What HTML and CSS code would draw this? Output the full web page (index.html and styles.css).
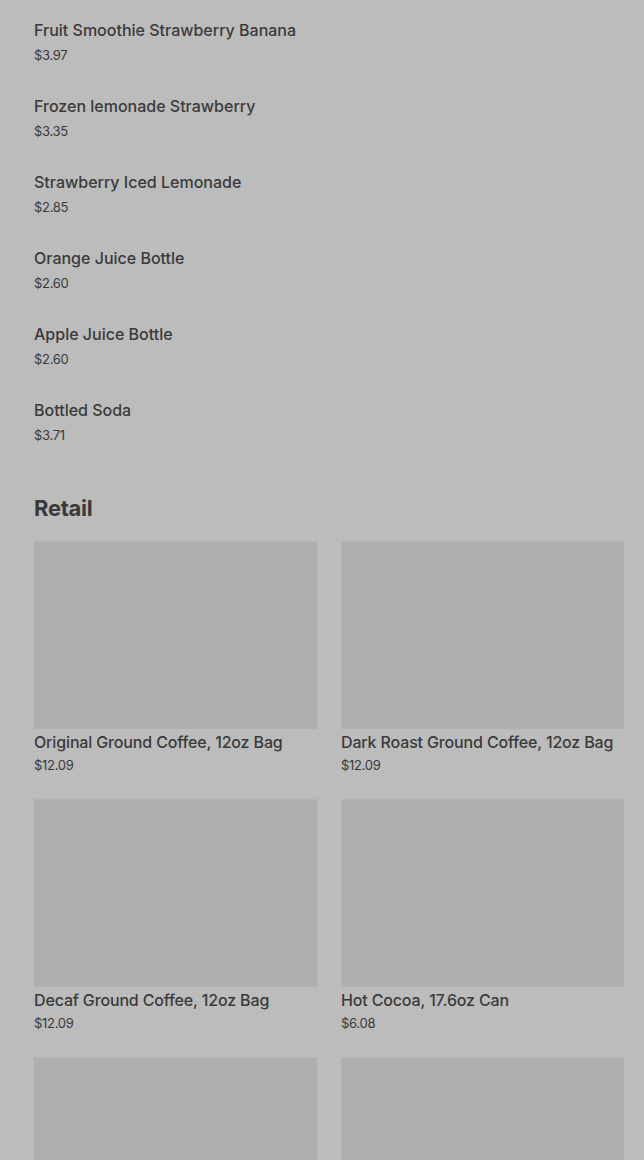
FILE: index.html
```html
<!DOCTYPE html>
<html lang="en">
<head>
    <meta charset="UTF-8">
    <meta name="viewport" content="width=device-width, initial-scale=1.0">
    <title>Menu</title>
    <link rel="stylesheet" href="styles.css">
</head>
<body>
    <div class="page">
        <ul class="menu-list">
            <li class="menu-item">
                <p class="item-name">Fruit Smoothie Strawberry Banana</p>
                <p class="item-price">$3.97</p>
            </li>
            <li class="menu-item">
                <p class="item-name">Frozen lemonade Strawberry</p>
                <p class="item-price">$3.35</p>
            </li>
            <li class="menu-item">
                <p class="item-name">Strawberry Iced Lemonade</p>
                <p class="item-price">$2.85</p>
            </li>
            <li class="menu-item">
                <p class="item-name">Orange Juice Bottle</p>
                <p class="item-price">$2.60</p>
            </li>
            <li class="menu-item">
                <p class="item-name">Apple Juice Bottle</p>
                <p class="item-price">$2.60</p>
            </li>
            <li class="menu-item">
                <p class="item-name">Bottled Soda</p>
                <p class="item-price">$3.71</p>
            </li>
        </ul>

        <h2 class="section-title">Retail</h2>
        <div class="card-grid">
            <div class="card">
                <div class="card-img"></div>
                <p class="item-name">Original Ground Coffee, 12oz Bag</p>
                <p class="item-price">$12.09</p>
            </div>
            <div class="card">
                <div class="card-img"></div>
                <p class="item-name">Dark Roast Ground Coffee, 12oz Bag</p>
                <p class="item-price">$12.09</p>
            </div>
            <div class="card">
                <div class="card-img"></div>
                <p class="item-name">Decaf Ground Coffee, 12oz Bag</p>
                <p class="item-price">$12.09</p>
            </div>
            <div class="card">
                <div class="card-img"></div>
                <p class="item-name">Hot Cocoa, 17.6oz Can</p>
                <p class="item-price">$6.08</p>
            </div>
            <div class="card">
                <div class="card-img"></div>
            </div>
            <div class="card">
                <div class="card-img"></div>
            </div>
        </div>
    </div>
</body>
</html>
```

FILE: styles.css
```css
body {
    font-family: Inter, 'Noto Sans', sans-serif;
    margin: 0;
    padding: 0;
    background-color: #bcbcbc;
    color: #3a3a3a;
    overflow: hidden;
}

.page {
    padding: 0 20px 0 34px;
}

.menu-list {
    list-style: none;
    margin: 0;
    padding: 20px 0 0;
}

.menu-item {
    height: 76px;
}

.menu-item:last-child {
    height: 48px;
}

.item-name {
    margin: 0;
    font-size: 16px;
    line-height: 20px;
    font-weight: 500;
}

.item-price {
    margin: 6px 0 0;
    font-size: 13px;
    line-height: 18px;
    letter-spacing: -0.3px;
}

.section-title {
    margin: 46px 0 19px;
    font-size: 22px;
    line-height: 28px;
    font-weight: 700;
    letter-spacing: -0.3px;
}

.card-grid {
    display: grid;
    grid-template-columns: 1fr 1fr;
    column-gap: 24px;
    row-gap: 25px;
}

.card-img {
    height: 187px;
    background-color: #afafaf;
    border-top: 1px solid #b3b3b3;
    margin-bottom: 3px;
}

.card .item-name {
    letter-spacing: -0.15px;
}

.card .item-price {
    margin-top: 4px;
}
```
